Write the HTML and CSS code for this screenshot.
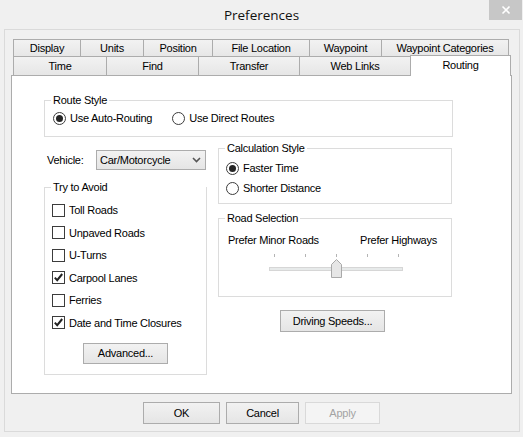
FILE: index.html
```html
<!DOCTYPE html>
<html>
<head>
<meta charset="utf-8">
<title>Preferences</title>
<link rel="stylesheet" href="styles.css">
</head>
<body>
<div class="titlebar">
  <div class="title">Preferences</div>
  <div class="close"><svg width="10" height="10" viewBox="0 0 10 10"><path d="M1.5 1.5 L8.5 8.5 M8.5 1.5 L1.5 8.5" stroke="#fff" stroke-width="1.6"/></svg></div>
</div>
<div class="frame">
  <div class="tabctl">
    <div class="tabrow row1">
      <div class="tab w-display">Display</div>
      <div class="tab w-units">Units</div>
      <div class="tab w-position">Position</div>
      <div class="tab w-file">File Location</div>
      <div class="tab w-waypoint">Waypoint</div>
      <div class="tab w-cats">Waypoint Categories</div>
    </div>
    <div class="tabrow row2">
      <div class="tab w-time">Time</div>
      <div class="tab w-find">Find</div>
      <div class="tab w-transfer">Transfer</div>
      <div class="tab w-web">Web Links</div>
      <div class="tab selected w-routing">Routing</div>
    </div>
    <div class="panel">
      <div class="group route">
        <div class="legend">Route Style</div>
        <div class="radios">
          <div class="radio"><span class="circle on"></span>Use Auto-Routing</div>
          <div class="radio"><span class="circle"></span>Use Direct Routes</div>
        </div>
      </div>
      <div class="cols">
        <div class="leftcol">
          <div class="vehicle">
            <span class="vlabel">Vehicle:</span>
            <div class="select">Car/Motorcycle<svg class="chev" width="9" height="6" viewBox="0 0 9 6"><path d="M1 1 L4.5 4.5 L8 1" fill="none" stroke="#555" stroke-width="1.6"/></svg></div>
          </div>
          <div class="group avoid">
            <div class="legend">Try to Avoid</div>
            <div class="checks">
              <div class="check"><span class="box"></span>Toll Roads</div>
              <div class="check"><span class="box"></span>Unpaved Roads</div>
              <div class="check"><span class="box"></span>U-Turns</div>
              <div class="check"><span class="box"><svg width="11" height="11" viewBox="0 0 11 11"><path d="M1.8 5.6 L4.2 8.2 L9.2 2" fill="none" stroke="#222" stroke-width="2"/></svg></span>Carpool Lanes</div>
              <div class="check"><span class="box"></span>Ferries</div>
              <div class="check"><span class="box"><svg width="11" height="11" viewBox="0 0 11 11"><path d="M1.8 5.6 L4.2 8.2 L9.2 2" fill="none" stroke="#222" stroke-width="2"/></svg></span>Date and Time Closures</div>
            </div>
            <div class="btn advanced">Advanced...</div>
          </div>
        </div>
        <div class="rightcol">
          <div class="group calc">
            <div class="legend">Calculation Style</div>
            <div class="vradios">
              <div class="radio"><span class="circle on"></span>Faster Time</div>
              <div class="radio"><span class="circle"></span>Shorter Distance</div>
            </div>
          </div>
          <div class="group road">
            <div class="legend">Road Selection</div>
            <div class="ends"><span>Prefer Minor Roads</span><span>Prefer Highways</span></div>
            <svg class="slider" width="135" height="26" viewBox="0 0 135 26">
              <path d="M5.5 1 V4 M36.5 1 V4 M67.5 1 V4 M98.5 1 V4 M129.5 1 V4" stroke="#b4b4b4" stroke-width="1"/>
              <rect x="0.5" y="14.5" width="133" height="3" fill="#e7eaea" stroke="#d6d6d6"/>
              <path d="M62.5 11.5 L67.5 6.5 L72.5 11.5 V24.5 H62.5 Z" fill="#e6e6e6" stroke="#a9a9a9"/>
            </svg>
          </div>
          <div class="btn speeds">Driving Speeds...</div>
        </div>
      </div>
    </div>
  </div>
  <div class="actions">
    <div class="btn ok">OK</div>
    <div class="btn cancel">Cancel</div>
    <div class="btn apply disabled">Apply</div>
  </div>
</div>
</body>
</html>
```
FILE: styles.css
```css
html, body {
  margin: 0;
  padding: 0;
}
body {
  width: 523px;
  height: 437px;
  overflow: hidden;
  background: #f0f0f0;
  font-family: "Liberation Sans", Arial, sans-serif;
  font-size: 11px;
  letter-spacing: -0.25px;
  color: #000;
}
.titlebar {
  height: 29px;
  display: grid;
  grid-template-columns: 1fr auto 1fr;
  align-items: start;
}
.title {
  grid-column: 2;
  font-family: "Open Sans", "Noto Sans", sans-serif;
  font-size: 13.5px;
  letter-spacing: 0;
  line-height: 30px;
  color: #111;
}
.close {
  grid-column: 3;
  justify-self: end;
  width: 33px;
  height: 20px;
  margin-right: 1px;
  background: #c7c7c7;
  display: flex;
  align-items: center;
  justify-content: center;
}
.frame {
  margin-left: 4px;
  width: 516px;
  height: 403px;
  box-sizing: border-box;
  border: 1px solid #dadada;
  padding-top: 9px;
}
.tabctl {
  margin: 0 7px 0 6px;
}
.tabrow {
  display: flex;
  align-items: flex-start;
  padding-left: 2px;
}
.row1 { height: 18px; }
.row2 { height: 19px; margin-top: -1px; }
.tab {
  box-sizing: border-box;
  border: 1px solid #acacac;
  border-bottom: none;
  background: linear-gradient(#f2f2f2, #e6e6e6);
  text-align: center;
  flex: none;
}
.tab + .tab { margin-left: -1px; }
.row1 .tab { height: 18px; line-height: 16px; }
.row2 .tab { height: 19px; line-height: 18px; }
.row2 .tab.selected {
  position: relative;
  z-index: 1;
  height: 21px;
  margin-top: -1px;
  line-height: 18px;
  background: #fff;
}
.w-display { width: 68px; }
.w-units { width: 64px; }
.w-position { width: 70px; }
.w-file { width: 98px; }
.w-waypoint { width: 73px; }
.w-cats { width: 128px; }
.w-time { width: 94px; }
.w-find { width: 93px; }
.w-transfer { width: 102px; }
.w-web { width: 112px; }
.w-routing { width: 101px; }
.panel {
  box-sizing: border-box;
  height: 319px;
  background: #fff;
  border: 1px solid #acacac;
  padding: 24px 0 0 32px;
}
.group {
  box-sizing: border-box;
  border: 1px solid #dcdcdc;
}
.legend {
  display: table;
  margin: -7px 0 0 6px;
  padding: 0 2px;
  background: #fff;
  line-height: 13px;
}
.route {
  width: 409px;
  padding-bottom: 10px;
}
.radios {
  display: flex;
  gap: 20px;
  margin-top: 3px;
  padding-left: 8px;
}
.radio {
  display: flex;
  align-items: center;
  gap: 4px;
  height: 16px;
}
.circle {
  box-sizing: border-box;
  width: 13px;
  height: 13px;
  border: 1px solid #3c3c3c;
  border-radius: 50%;
  background: #fff;
  display: flex;
  align-items: center;
  justify-content: center;
  flex: none;
}
.circle.on::after {
  content: "";
  width: 7px;
  height: 7px;
  border-radius: 50%;
  background: #262626;
}
.cols {
  display: grid;
  grid-template-columns: 163px 234px;
  column-gap: 11px;
  align-items: start;
}
.vehicle {
  display: flex;
  align-items: center;
  height: 20px;
  margin-top: 13px;
}
.vlabel {
  box-sizing: border-box;
  width: 52px;
  padding-left: 3px;
}
.select {
  box-sizing: border-box;
  width: 110px;
  height: 20px;
  border: 1px solid #acacac;
  background: linear-gradient(#f2f2f2, #e5e5e5);
  display: flex;
  align-items: center;
  justify-content: space-between;
  padding: 0 4px 0 3px;
}
.avoid {
  width: 163px;
  margin-top: 17px;
  padding-bottom: 10px;
  display: flex;
  flex-direction: column;
}
.checks {
  display: flex;
  flex-direction: column;
  gap: 6.6px;
  margin-top: 8px;
  padding-left: 7px;
}
.check {
  display: flex;
  align-items: center;
  gap: 4px;
  height: 16px;
}
.box {
  box-sizing: border-box;
  width: 13px;
  height: 13px;
  border: 1px solid #3c3c3c;
  background: #fff;
  display: flex;
  align-items: center;
  justify-content: center;
  flex: none;
}
.btn {
  box-sizing: border-box;
  border: 1px solid #acacac;
  background: linear-gradient(#f2f2f2, #e5e5e5);
  display: flex;
  align-items: center;
  justify-content: center;
  flex: none;
}
.advanced {
  width: 85px;
  height: 21px;
  margin-top: 12px;
  align-self: center;
}
.calc {
  margin-top: 11px;
  padding-bottom: 7px;
}
.vradios {
  display: flex;
  flex-direction: column;
  gap: 4px;
  margin-top: 5px;
  padding-left: 7px;
}
.road {
  margin-top: 14px;
  padding-bottom: 17px;
}
.ends {
  display: flex;
  justify-content: space-between;
  line-height: 14px;
  margin-top: 8px;
  padding: 0 14px 0 9px;
}
.slider {
  display: block;
  margin: 6px 0 0 50px;
}
.speeds {
  width: 105px;
  height: 22px;
  margin: 13px 0 0 62px;
}
.actions {
  display: flex;
  justify-content: center;
  gap: 6px;
  margin-top: 8px;
  padding-right: 1px;
}
.actions .btn { height: 22px; }
.ok { width: 77px; }
.cancel { width: 73px; }
.apply { width: 75px; }
.disabled {
  color: #a3a3a3;
  background: #f4f4f4;
  border-color: #d9d9d9;
}
```
